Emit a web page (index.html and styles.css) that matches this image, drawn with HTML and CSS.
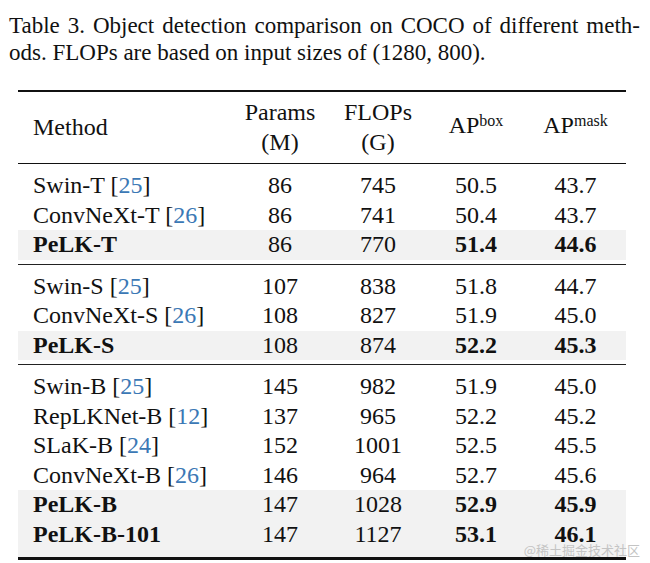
FILE: index.html
```html
<!DOCTYPE html>
<html lang="en">
<head>
<meta charset="utf-8">
<title>Table 3</title>
<link rel="stylesheet" href="styles.css">
</head>
<body>
<div class="page">
  <div class="caption">
    <div class="cap-line first">Table 3. Object detection comparison on COCO of different meth-</div>
    <div class="cap-line">ods. FLOPs are based on input sizes of (1280, 800).</div>
  </div>
  <div class="table">
    <div class="head row">
      <div class="c method">Method</div>
      <div class="c">Params<br>(M)</div>
      <div class="c">FLOPs<br>(G)</div>
      <div class="c ap">AP<sup>box</sup></div>
      <div class="c ap">AP<sup>mask</sup></div>
    </div>
    <div class="section">
      <div class="row"><div class="c method">Swin-T [<span class="ref">25</span>]</div><div class="c">86</div><div class="c">745</div><div class="c">50.5</div><div class="c">43.7</div></div>
      <div class="row"><div class="c method">ConvNeXt-T [<span class="ref">26</span>]</div><div class="c">86</div><div class="c">741</div><div class="c">50.4</div><div class="c">43.7</div></div>
      <div class="row hl"><div class="c method b">PeLK-T</div><div class="c">86</div><div class="c">770</div><div class="c b">51.4</div><div class="c b">44.6</div></div>
    </div>
    <div class="section">
      <div class="row"><div class="c method">Swin-S [<span class="ref">25</span>]</div><div class="c">107</div><div class="c">838</div><div class="c">51.8</div><div class="c">44.7</div></div>
      <div class="row"><div class="c method">ConvNeXt-S [<span class="ref">26</span>]</div><div class="c">108</div><div class="c">827</div><div class="c">51.9</div><div class="c">45.0</div></div>
      <div class="row hl"><div class="c method b">PeLK-S</div><div class="c">108</div><div class="c">874</div><div class="c b">52.2</div><div class="c b">45.3</div></div>
    </div>
    <div class="section last">
      <div class="row"><div class="c method">Swin-B [<span class="ref">25</span>]</div><div class="c">145</div><div class="c">982</div><div class="c">51.9</div><div class="c">45.0</div></div>
      <div class="row"><div class="c method">RepLKNet-B [<span class="ref">12</span>]</div><div class="c">137</div><div class="c">965</div><div class="c">52.2</div><div class="c">45.2</div></div>
      <div class="row"><div class="c method">SLaK-B [<span class="ref">24</span>]</div><div class="c">152</div><div class="c">1001</div><div class="c">52.5</div><div class="c">45.5</div></div>
      <div class="row"><div class="c method">ConvNeXt-B [<span class="ref">26</span>]</div><div class="c">146</div><div class="c">964</div><div class="c">52.7</div><div class="c">45.6</div></div>
      <div class="row hl"><div class="c method b">PeLK-B</div><div class="c">147</div><div class="c">1028</div><div class="c b">52.9</div><div class="c b">45.9</div></div>
      <div class="row hl end"><div class="c method b">PeLK-B-101</div><div class="c">147</div><div class="c">1127</div><div class="c b">53.1</div><div class="c b">46.1</div></div>
    </div>
  </div>
  <div class="watermark">@稀土掘金技术社区</div>
</div>
</body>
</html>
```

FILE: styles.css
```css
html, body {
  margin: 0;
  padding: 0;
  background: #fff;
}
body {
  font-family: "Liberation Serif", "Times New Roman", serif;
  color: #111;
  width: 650px;
  height: 563px;
  overflow: hidden;
}
.page {
  position: relative;
  width: 650px;
  height: 563px;
}
.caption {
  padding: 12px 10px 0 9px;
  font-size: 23px;
  line-height: 27px;
}
.cap-line {
  white-space: nowrap;
}
.cap-line.first {
  text-align: justify;
  text-align-last: justify;
}
.table {
  margin: 24px 0 0 18px;
  width: 608px;
  border-top: 2px solid #111;
  border-bottom: 3px solid #111;
  font-size: 24px;
  line-height: 29.5px;
}
.row {
  display: grid;
  grid-template-columns: 213px 98px 98px 98px 1fr;
  align-items: center;
}
.c {
  text-align: center;
}
.c.method {
  text-align: left;
  padding-left: 15px;
}
.head {
  padding: 5px 0 6px;
  border-bottom: 1.5px solid #111;
  line-height: 30px;
}
.head .ap {
  padding-bottom: 4px;
}
sup {
  font-size: 16px;
  line-height: 0;
  vertical-align: 7px;
}
.section {
  padding: 7px 0 4px;
  border-bottom: 1.5px solid #222;
}
.section.last {
  border-bottom: none;
  padding-bottom: 0;
}
.hl {
  background: #f2f2f2;
}
.hl.end {
  padding-bottom: 8px;
}
.b {
  font-weight: bold;
}
.ref {
  color: #3b78b5;
}
.watermark {
  position: absolute;
  right: 10px;
  bottom: 4px;
  font-family: "Noto Sans CJK SC", sans-serif;
  font-size: 13px;
  color: #c4c4c4;
}
```
